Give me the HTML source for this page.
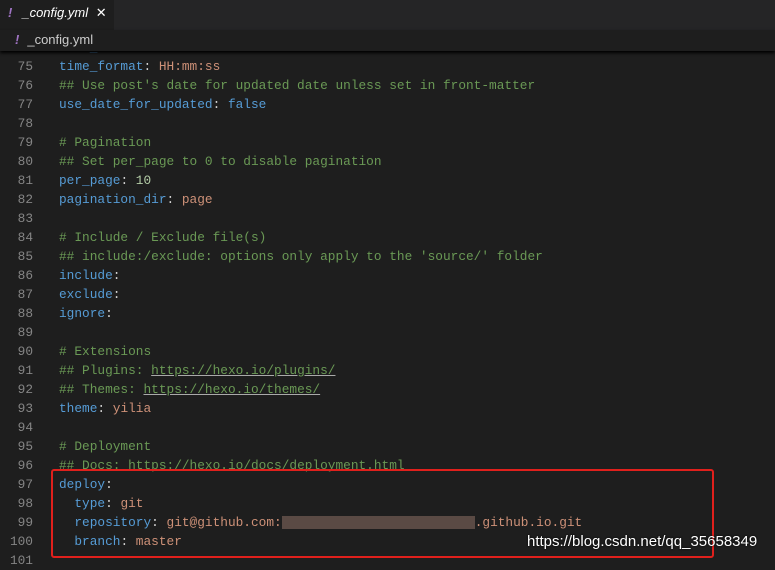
<!DOCTYPE html><html><head><style>
body{margin:0;width:775px;height:563px;background:#1e1e1e;overflow:hidden;position:relative;font-family:"Liberation Sans",sans-serif}
.tabs{position:absolute;top:0;left:0;width:775px;height:30px;background:#252526}
.tab{position:absolute;left:0;top:0;width:114px;height:30px;background:#1e1e1e;color:#fff;font-size:13px;font-style:italic;line-height:26px}
.bc{position:absolute;top:30px;left:0;width:775px;height:21px;background:#1e1e1e;color:#ccc;font-size:13px;line-height:20px;z-index:2;box-shadow:0 2px 3px #000}
.code{position:absolute;top:38px;left:0;font-family:"Liberation Mono",monospace;font-size:12.8px;line-height:19px;white-space:pre;color:#d4d4d4}
.ln{display:inline-block;width:33px;text-align:right;color:#858585;margin-right:26px}
.k{color:#569cd6}.s{color:#ce9178}.c{color:#6a9955}.n{color:#b5cea8}.u{color:#6a9955;text-decoration:underline;text-decoration-color:#aaa}
.box{position:absolute;left:51px;top:469px;width:659px;height:85px;border:2px solid #e0201c;border-radius:3px}
.wm{position:absolute;left:527px;top:533px;color:#fff;font-size:15px;text-shadow:0 0 2px #000}
.blur{display:inline-block;width:193px;height:13px;background:#5a4a44;vertical-align:middle}
</style></head><body>
<div class="tabs"><div class="tab"><span style="color:#a074c4;font-weight:bold;margin:0 10px 0 8px">!</span>_config.yml <span style="font-style:normal;margin-left:4px">✕</span></div></div>
<div class="bc"><span style="color:#a074c4;font-weight:bold;font-style:italic;margin:0 8px 0 15px">!</span>_config.yml</div>
<div class="code"><span class="ln">74</span><span class="k">date_format</span>: <span class="s">YYYY-MM-DD</span>
<span class="ln">75</span><span class="k">time_format</span>: <span class="s">HH:mm:ss</span>
<span class="ln">76</span><span class="c">## Use post's date for updated date unless set in front-matter</span>
<span class="ln">77</span><span class="k">use_date_for_updated</span>: <span class="k">false</span>
<span class="ln">78</span>
<span class="ln">79</span><span class="c"># Pagination</span>
<span class="ln">80</span><span class="c">## Set per_page to 0 to disable pagination</span>
<span class="ln">81</span><span class="k">per_page</span>: <span class="n">10</span>
<span class="ln">82</span><span class="k">pagination_dir</span>: <span class="s">page</span>
<span class="ln">83</span>
<span class="ln">84</span><span class="c"># Include / Exclude file(s)</span>
<span class="ln">85</span><span class="c">## include:/exclude: options only apply to the 'source/' folder</span>
<span class="ln">86</span><span class="k">include</span>:
<span class="ln">87</span><span class="k">exclude</span>:
<span class="ln">88</span><span class="k">ignore</span>:
<span class="ln">89</span>
<span class="ln">90</span><span class="c"># Extensions</span>
<span class="ln">91</span><span class="c">## Plugins: </span><span class="u">https://hexo.io/plugins/</span>
<span class="ln">92</span><span class="c">## Themes: </span><span class="u">https://hexo.io/themes/</span>
<span class="ln">93</span><span class="k">theme</span>: <span class="s">yilia</span>
<span class="ln">94</span>
<span class="ln">95</span><span class="c"># Deployment</span>
<span class="ln">96</span><span class="c">## Docs: </span><span class="u">https://hexo.io/docs/deployment.html</span>
<span class="ln">97</span><span class="k">deploy</span>:
<span class="ln">98</span>  <span class="k">type</span>: <span class="s">git</span>
<span class="ln">99</span>  <span class="k">repository</span>: <span class="s">git@github.com:<span class="blur"></span>.github.io.git</span>
<span class="ln">100</span>  <span class="k">branch</span>: <span class="s">master</span>
<span class="ln">101</span></div>
<div class="box"></div>
<div class="wm">https://blog.csdn.net/qq_35658349</div>
</body></html>
